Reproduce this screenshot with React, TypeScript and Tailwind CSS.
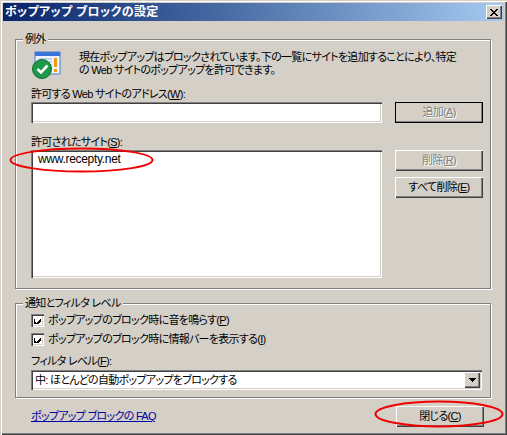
import React from "react";

const raised = "shadow-[inset_1px_1px_0_#fff,inset_-1px_-1px_0_#404040,inset_-2px_-2px_0_#808080]";
const sunken = "shadow-[inset_1px_1px_0_#808080,inset_2px_2px_0_#404040,inset_-1px_-1px_0_#fff,inset_-2px_-2px_0_#d4d0c8]";
const etched = "border border-[#808080] shadow-[inset_1px_1px_0_#fff,1px_1px_0_#fff]";
const jp = "font-['Liberation_Sans','Noto_Sans_CJK_JP',sans-serif] text-[11px] leading-[13px] tracking-[-0.7px] [font-feature-settings:'palt'] whitespace-nowrap";

function Btn({ children, disabled, className = "" }: { children: React.ReactNode; disabled?: boolean; className?: string }) {
  return (
    <div className={`flex h-[21px] w-[88px] items-center justify-center bg-[#d4d0c8] ${raised} ${disabled ? "text-[#808080] [text-shadow:1px_1px_0_#fff]" : "text-black"} ${className}`}>
      {children}
    </div>
  );
}

function Check({ children }: { children: React.ReactNode }) {
  return (
    <div className="flex h-[13px] items-center gap-[4px]">
      <div className={`flex h-[13px] w-[13px] items-center justify-center bg-white ${sunken}`}>
        <svg width="7" height="7" viewBox="0 0 7 7" shapeRendering="crispEdges">
          <path d="M0 2h1v3h1v1h1v-1h1v-1h1v-1h1v-1h1v3h-1v1h-1v1h-1v1h-1v1h-1v-1h-1v-1h-1z" fill="#000" />
        </svg>
      </div>
      <span>{children}</span>
    </div>
  );
}

function Legend({ children }: { children: React.ReactNode }) {
  return <span className="absolute left-[7px] top-[-7px] bg-[#d4d0c8] px-[2px]">{children}</span>;
}

export default function App() {
  return (
    <div className={`${jp} relative flex h-[435px] w-[507px] flex-col bg-[#d4d0c8] p-[3px] text-black shadow-[inset_1px_1px_0_#d4d0c8,inset_2px_2px_0_#fff,inset_-1px_-1px_0_#404040,inset_-2px_-2px_0_#808080]`}>
      <div className="flex h-[18px] items-center justify-between bg-gradient-to-r from-[#0a246a] to-[#a6caf0] pl-[2px] pr-[2px]">
        <span className="text-[12px] font-bold tracking-[0.35px] text-white">ポップアップ ブロックの設定</span>
        <div className={`flex h-[14px] w-[16px] items-center justify-center bg-[#d4d0c8] ${raised}`}>
          <svg width="8" height="7" viewBox="0 0 8 7" shapeRendering="crispEdges">
            <path d="M0 0h2v1h1v1h2v-1h1v-1h2v1h-1v1h-1v1h-1v1h1v1h1v1h1v1h-2v-1h-1v-1h-2v1h-1v1h-2v-1h1v-1h1v-1h1v-1h-1v-1h-1v-1h-1z" fill="#000" />
          </svg>
        </div>
      </div>

      <div className="ml-[12px] mr-[13px] mt-[18px]">
        <div className={`relative h-[250px] pl-[15px] ${etched}`}>
          <Legend>例外</Legend>
          <div className="flex items-start">
            <div className="mt-[11px] h-[28px] w-[30px] shrink-0">
              <svg width="30" height="28" viewBox="0 0 30 28">
                <rect x="4" y="1" width="25" height="22" fill="#eef3fb" stroke="#4a7fd0" />
                <rect x="4" y="1" width="25" height="4" fill="#3a74d8" />
                <path d="M8 8h13M8 11h13M14 14h7M14 17h7" stroke="#9bb4dc" />
                <rect x="23" y="7" width="3" height="9" fill="#f09a1c" />
                <rect x="23" y="18" width="3" height="3" fill="#f09a1c" />
                <circle cx="11" cy="18" r="9.5" fill="#1c9a4a" stroke="#0f6b30" />
                <path d="M6.5 18l3.5 3.5 6.5-7" fill="none" stroke="#fff" strokeWidth="2.6" />
              </svg>
            </div>
            <div className="ml-[18px] mt-[11px]">
              現在ポップアップはブロックされています。下の一覧にサイトを追加することにより、特定
              <br />
              の Web サイトのポップアップを許可できます。
            </div>
          </div>
          <div className="mt-[9px]">
            許可する Web サイトのアドレス(<u>W</u>):
          </div>
          <div className="mt-[1px] flex gap-[13px]">
            <div className={`h-[21px] w-[351px] bg-white ${sunken}`} />
            <Btn disabled className="outline outline-1 -outline-offset-1 outline-black">
              追加(<u>A</u>)
            </Btn>
          </div>
          <div className="mt-[13px]">
            許可されたサイト(<u>S</u>):
          </div>
          <div className="mt-[1px] flex gap-[13px]">
            <div className={`h-[128px] w-[351px] bg-white pl-[7px] pt-[3px] text-[12px] tracking-[-0.3px] ${sunken}`}>www.recepty.net</div>
            <div className="flex flex-col gap-[6px]">
              <Btn disabled>
                削除(<u>R</u>)
              </Btn>
              <Btn>
                すべて削除(<u>E</u>)
              </Btn>
            </div>
          </div>
        </div>

        <div className={`relative mt-[14px] h-[95px] pl-[15px] pt-[10px] ${etched}`}>
          <Legend>通知とフィルタ レベル</Legend>
          <div className="flex flex-col gap-[6px]">
            <Check>
              ポップアップのブロック時に音を鳴らす(<u>P</u>)
            </Check>
            <Check>
              ポップアップのブロック時に情報バーを表示する(<u>I</u>)
            </Check>
          </div>
          <div className="mt-[9px]">
            フィルタ レベル(<u>F</u>):
          </div>
          <div className={`mt-[2px] flex h-[20px] w-[451px] items-center justify-between bg-white pl-[4px] pr-[2px] ${sunken}`}>
            <span>中: ほとんどの自動ポップアップをブロックする</span>
            <div className={`flex h-[16px] w-[16px] items-center justify-center bg-[#d4d0c8] ${raised}`}>
              <svg width="7" height="4" viewBox="0 0 7 4" shapeRendering="crispEdges">
                <path d="M0 0h7v1h-1v1h-1v1h-1v1h-1v-1h-1v-1h-1v-1h-1z" fill="#000" />
              </svg>
            </div>
          </div>
        </div>

        <div className="mt-[8px] flex items-center justify-between pl-[16px]">
          <a className="text-[#0000a0] underline">ポップアップ ブロックの FAQ</a>
          <Btn className="mr-[7px]">
            閉じる(<u>C</u>)
          </Btn>
        </div>
      </div>

      <svg className="absolute left-[9px] top-[147px]" width="145" height="26" viewBox="0 0 145 26">
        <ellipse cx="72.5" cy="13" rx="71" ry="11.5" fill="none" stroke="#f00000" strokeWidth="2" />
      </svg>
      <svg className="absolute left-[374px] top-[400px]" width="130" height="28" viewBox="0 0 130 28">
        <ellipse cx="65" cy="14" rx="63.5" ry="12.5" fill="none" stroke="#f00000" strokeWidth="2" />
      </svg>
    </div>
  );
}
